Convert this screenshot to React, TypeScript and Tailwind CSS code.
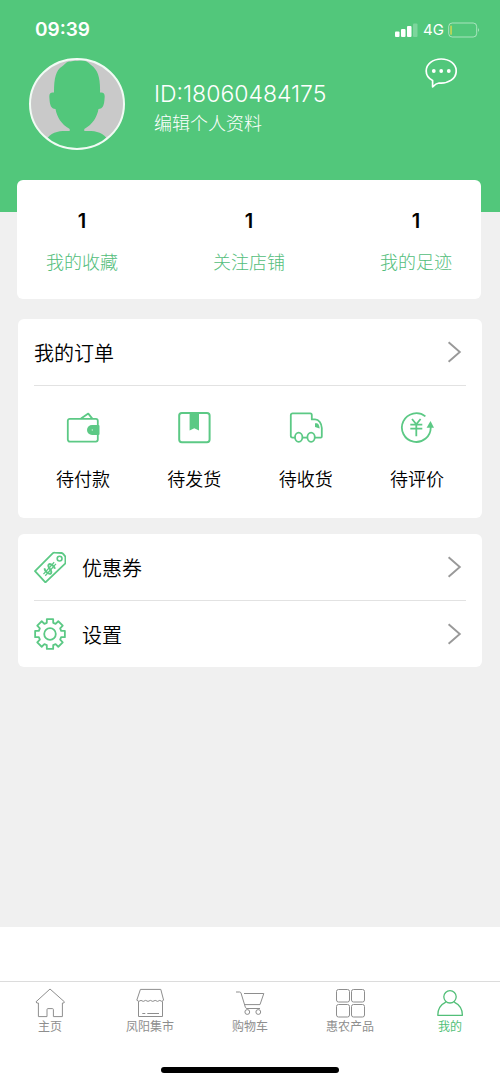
import type { ReactNode } from "react";

const stats = [
  { label: "我的收藏", count: 1 },
  { label: "关注店铺", count: 1 },
  { label: "我的足迹", count: 1 },
];

const orders = [
  { label: "待付款", icon: <WalletIcon /> },
  { label: "待发货", icon: <PackageIcon /> },
  { label: "待收货", icon: <TruckIcon /> },
  { label: "待评价", icon: <YenIcon /> },
];

const tabs = [
  { label: "主页", icon: <HomeIcon /> },
  { label: "凤阳集市", icon: <MarketIcon /> },
  { label: "购物车", icon: <CartIcon /> },
  { label: "惠农产品", icon: <GridIcon /> },
  { label: "我的", icon: <UserIcon />, active: true },
];

type IconProps = { className?: string; children: ReactNode };

function OrderSvg({ children }: { children: ReactNode }) {
  return (
    <svg
      className="size-[34px] text-[#5cc985]"
      viewBox="0 0 34 34"
      fill="none"
      stroke="currentColor"
      strokeWidth="1.8"
      strokeLinejoin="round"
      aria-hidden="true"
    >
      {children}
    </svg>
  );
}

function Svg32({ className = "", children }: IconProps) {
  return (
    <svg
      className={`size-8 shrink-0 ${className}`}
      viewBox="0 0 32 32"
      fill="none"
      stroke="currentColor"
      strokeLinejoin="round"
      aria-hidden="true"
    >
      {children}
    </svg>
  );
}

function WalletIcon() {
  return (
    <OrderSvg>
      <rect x="1.8" y="7.8" width="30" height="22.8" rx="2" />
      <path d="M15 7.6 22.3 2.6 26.3 7.6" />
      <path
        d="M26 14h6.5a1 1 0 0 1 1 1v8a1 1 0 0 1-1 1H26a5 5 0 0 1 0-10Z"
        fill="currentColor"
        stroke="none"
      />
      <circle cx="26.3" cy="19" r="0.7" fill="#c9efd6" stroke="none" />
    </OrderSvg>
  );
}

function PackageIcon() {
  return (
    <OrderSvg>
      <rect x="2.2" y="2" width="30.4" height="29.2" rx="2.6" strokeWidth="2" />
      <path d="M12.6 1.6H22V19.4L17.3 17.2 12.6 19.4Z" fill="currentColor" stroke="none" />
    </OrderSvg>
  );
}

function TruckIcon() {
  return (
    <OrderSvg>
      <path d="M6 26.6H3.6a1.8 1.8 0 0 1-1.8-1.8V4.2a1.8 1.8 0 0 1 1.8-1.8H21.2a1.6 1.6 0 0 1 1.6 1.6V8.4H26C30 8.4 32.6 12.6 32.8 17V25.6a1 1 0 0 1-1 1H26" />
      <path d="M13.4 26.6h5" />
      <ellipse cx="9.7" cy="26.2" rx="3.7" ry="4.6" />
      <ellipse cx="22.1" cy="26.2" rx="3.7" ry="4.6" />
      <path d="M26 12.2h2.2c1.6 1.2 2.4 3 2.4 5.4L26 16Z" fill="currentColor" stroke="none" />
    </OrderSvg>
  );
}

function YenIcon() {
  return (
    <OrderSvg>
      <path d="M25.4 5.4A14.4 14.4 0 1 0 30.7 16" />
      <path d="M26.6 16.8 30.5 10 34 16.8Z" fill="currentColor" stroke="none" />
      <path d="M12 8 16.3 13.2 20.6 8M10.3 13.6H22.3M10.3 17.6H22.3M16.3 13.2V25.2" />
    </OrderSvg>
  );
}

function CouponIcon() {
  return (
    <Svg32 className="text-[#5cc985]">
      <path
        d="M1 20.2 18.9 2.2Q19.6 1.5 20.6 1.6L27.6 2Q28.6 2.1 29.2 2.9L31 5.1Q31.4 5.7 31.4 6.4V12.4L11.4 31.4Z"
        strokeWidth="1.8"
      />
      <circle cx="25.6" cy="7.6" r="2.4" strokeWidth="1.6" />
      <g transform="rotate(42 15.5 17.8)" strokeWidth="1.9">
        <path d="M19.4 14.4c-1-1.8-7.4-2-7.4.8 0 3.2 7.6 1.6 7.6 4.9 0 2.8-7 2.6-8 .4" />
        <path d="M14.6 9.8v16M17 9.8v16" strokeWidth="1.3" />
      </g>
    </Svg32>
  );
}

// eight teeth, four corners each: root, tip, tip, root
const gearPoints = Array.from({ length: 8 }, (_, i) =>
  [
    [-16, 11.6],
    [-12, 15.2],
    [12, 15.2],
    [16, 11.6],
  ].map(([offset, radius]) => {
    const angle = ((i * 45 + offset) * Math.PI) / 180;
    return `${(16 + radius * Math.cos(angle)).toFixed(2)},${(16 + radius * Math.sin(angle)).toFixed(2)}`;
  })
)
  .flat()
  .join(" ");

function GearIcon() {
  return (
    <Svg32 className="text-[#5cc985]">
      <polygon points={gearPoints} strokeWidth="1.8" />
      <circle cx="16" cy="16" r="5.8" strokeWidth="1.8" />
    </Svg32>
  );
}

function HomeIcon() {
  return (
    <Svg32>
      <path d="M16 2 30.4 14.8 29.8 16H28.4V29.6H19.4V22.6a1 1 0 0 0-1-1H14a1 1 0 0 0-1 1V29.6H4.4V16H2.8L2 14.8Z" />
    </Svg32>
  );
}

function MarketIcon() {
  return (
    <Svg32>
      <path d="M6.4 2.4H26.8L29.6 13.2Q28 15.4 25.8 13.4 23.6 15.4 21.2 13.4 18.8 15.4 16.4 13.4 14 15.4 11.6 13.4 9.2 15.4 7 13.4 4.6 15.4 2.8 13.2Z" />
      <path d="M4.5 14.4V29.5H28.5V14.4M8.3 26.5H11.3M13.3 26.5H25" />
    </Svg32>
  );
}

function CartIcon() {
  return (
    <Svg32>
      <path d="M2 5H5.6Q6.6 5 7 6L11.4 20.4Q11.8 21.5 13 21.5H26" />
      <path d="M10 6.5H29.8L26 17.6H10.8" />
      <circle cx="13.3" cy="25" r="2.4" />
      <circle cx="24.3" cy="25" r="2.4" />
    </Svg32>
  );
}

function GridIcon() {
  return (
    <Svg32>
      <rect x="2.5" y="2.5" width="13" height="12.5" rx="2" />
      <rect x="17.5" y="2.5" width="13" height="12.5" rx="2" />
      <rect x="2.5" y="17.5" width="13" height="12.5" rx="2" />
      <rect x="17.5" y="17.5" width="13" height="12.5" rx="2" />
    </Svg32>
  );
}

function UserIcon() {
  return (
    <Svg32>
      <circle cx="16" cy="9.8" r="6.2" strokeWidth="1.3" />
      <path
        d="M11.8 15.2C6.8 17.6 3.8 22.4 3.8 28.3H28.4C28.4 22.4 25.2 17.6 20.2 15.2"
        strokeWidth="1.3"
      />
    </Svg32>
  );
}

function ChatIcon() {
  return (
    <Svg32>
      <path
        d="M7.6 22.6V28.8Q11 25.4 14 25C23.6 25.8 31.2 20.6 31.2 13 31.2 6.2 24.6 1 16.2 1S1.2 6.2 1.2 13C1.2 17 3.6 20.4 7.6 22.6Z"
        strokeWidth="1.7"
      />
      <g fill="currentColor" stroke="none">
        <circle cx="8.8" cy="13" r="1.9" />
        <circle cx="16.2" cy="13" r="1.9" />
        <circle cx="23.8" cy="13" r="1.9" />
      </g>
    </Svg32>
  );
}

function Chevron() {
  return (
    <svg
      className="h-6 w-4 shrink-0 text-[#999999]"
      viewBox="0 0 16 24"
      fill="none"
      stroke="currentColor"
      strokeWidth="1.9"
      aria-hidden="true"
    >
      <path d="M1.6 2.2 12.8 12 1.6 21.8" />
    </svg>
  );
}

function Avatar() {
  return (
    <svg className="h-[92px] w-24 shrink-0" viewBox="0 0 96 92" role="img" aria-label="头像">
      <clipPath id="avatar-clip">
        <ellipse cx="48" cy="46" rx="47" ry="45" />
      </clipPath>
      <g clipPath="url(#avatar-clip)">
        <rect width="96" height="92" fill="#c9c9c9" />
        <path
          fill="#52c77b"
          d="M48 3C44 2 42 4 40 3.5 37 4 35 7 33 8.5 27 12 25 20 25 34.5 21 34 20 36 20.4 40 20.8 47 22 51 26.5 51 28 59 32 66 40.7 71V73C31 73 24 73 18.4 80L16 92H80L77.6 80C72 73 65 73 55.3 73V71C64 66 68 59 69.5 51 74 51 75.2 47 75.6 40 76 36 75 34 71 34.5 71.5 20 69 12 62 7 58 3 54 1 48 3Z"
        />
      </g>
      <ellipse cx="48" cy="46" rx="47" ry="45" fill="none" stroke="#f1fbf4" strokeWidth="2" />
    </svg>
  );
}

function StatusBar() {
  return (
    <div className="flex h-7 items-center justify-between pr-5 pl-[35px]">
      <span className="text-[19px] leading-7 font-semibold">09:39</span>
      <div className="flex items-center gap-1">
        <svg className="h-[14px] w-6" viewBox="0 0 24 14" fill="currentColor" aria-hidden="true">
          <rect x="0" y="8.5" width="4.5" height="5.5" rx="1" />
          <rect x="6" y="6" width="4.5" height="8" rx="1" />
          <rect x="12" y="3" width="4.5" height="11" rx="1" />
          <rect x="18" y="0.5" width="4.5" height="13.5" rx="1" opacity="0.25" />
        </svg>
        <span className="text-[15px] leading-5">4G</span>
        <svg className="h-4 w-8" viewBox="0 0 32 16" fill="none" aria-hidden="true">
          <rect x="0.7" y="1" width="28" height="14" rx="3.5" stroke="#fff" strokeOpacity="0.5" />
          <path d="M30.3 5.8q1.6 2.2 0 4.4Z" fill="#fff" fillOpacity="0.7" />
          <rect x="2.4" y="3.4" width="1.3" height="9.4" rx="0.6" fill="#e3dc4a" />
        </svg>
      </div>
    </div>
  );
}

export default function App() {
  return (
    <div className="flex min-h-screen flex-col bg-white font-[Inter,'Noto_Sans_CJK_SC',sans-serif] text-black">
      <header className="bg-[#52c77b] pt-4 pb-[62px] text-white">
        <StatusBar />
        <div className="mt-[14px] flex items-start pr-[43px] pl-[29px]">
          <Avatar />
          <div className="flex-1 pt-5 pl-[29px]">
            <p className="text-[23px] leading-8 font-light">ID:18060484175</p>
            <a href="#profile" className="block text-lg leading-7 font-light">
              编辑个人资料
            </a>
          </div>
          <button type="button" aria-label="消息">
            <ChatIcon />
          </button>
        </div>
      </header>

      <main className="flex-1 bg-[#f0f0f0] px-[18px] pb-6">
        <section className="-mt-8 mr-px -ml-px flex justify-between rounded-md bg-white px-[29px] pt-[25px] pb-[22px]">
          {stats.map((item) => (
            <a key={item.label} href="#stats" className="flex flex-col items-center">
              <span className="text-xl leading-8 font-semibold">{item.count}</span>
              <span className="mt-3 text-lg leading-7 font-light text-[#52bd7a]">
                {item.label}
              </span>
            </a>
          ))}
        </section>

        <section className="mt-5 rounded-md bg-white px-4">
          <a
            href="#orders"
            className="flex h-[67px] items-center justify-between border-b border-[#e2e2e2] pr-[3px]"
          >
            <h2 className="pt-1 text-xl font-[350]">我的订单</h2>
            <Chevron />
          </a>
          <div className="flex justify-between px-[22px] pt-[25px] pb-[23px]">
            {orders.map((item) => (
              <a key={item.label} href="#orders" className="flex flex-col items-center gap-5">
                {item.icon}
                <span className="text-lg leading-[30px] font-[350]">{item.label}</span>
              </a>
            ))}
          </div>
        </section>

        <section className="mt-4 rounded-md bg-white px-4">
          <a
            href="#coupons"
            className="flex h-[67px] items-center gap-4 border-b border-[#e2e2e2] pr-[3px]"
          >
            <CouponIcon />
            <span className="flex-1 pt-1 text-xl font-[350]">优惠券</span>
            <Chevron />
          </a>
          <a href="#settings" className="flex h-[66px] items-center gap-4 pr-[3px]">
            <GearIcon />
            <span className="flex-1 pt-1 text-xl font-[350]">设置</span>
            <Chevron />
          </a>
        </section>
      </main>

      <footer className="pt-[54px]">
        <nav className="grid grid-cols-5 border-t border-[#dcdcdc] pt-[5px]">
          {tabs.map((tab) => (
            <a
              key={tab.label}
              href="#tab"
              aria-current={tab.active ? "page" : undefined}
              className={`flex flex-col items-center ${tab.active ? "text-[#52bf78]" : "text-[#8e8e8e]"}`}
            >
              {tab.icon}
              <span className="text-xs leading-4">{tab.label}</span>
            </a>
          ))}
        </nav>
        <div className="mx-auto mt-8 mb-2 h-[6px] w-[178px] rounded-full bg-black" />
      </footer>
    </div>
  );
}
